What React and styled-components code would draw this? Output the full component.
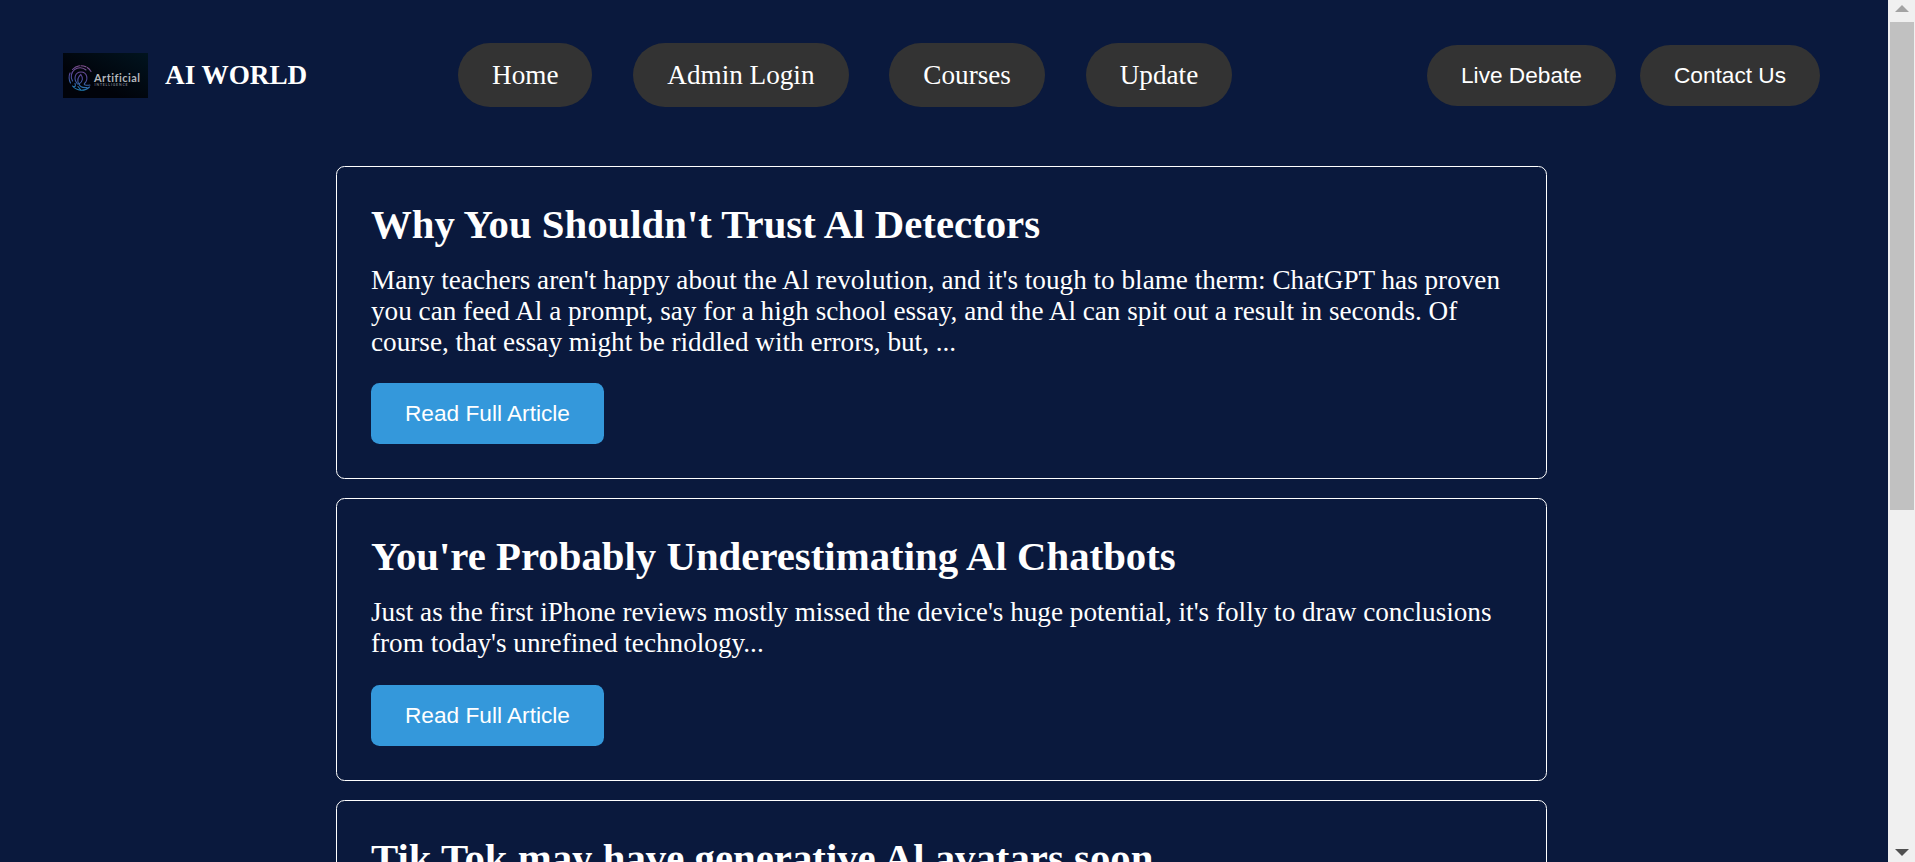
import React from "react";
import styled, { createGlobalStyle } from "styled-components";

const GlobalStyle = createGlobalStyle`
  html, body { margin: 0; height: 862px; overflow: hidden; background: #0a193d; }
  * { box-sizing: border-box; }
`;

const Screen = styled.div`
  display: flex;
  width: 1915px;
  height: 862px;
  overflow: hidden;
  background: #0a193d;
  color: #fff;
  font-family: "Liberation Serif", "Times New Roman", serif;
  font-size: 27.2px;
`;

const Page = styled.div`
  width: 1888px;
  height: 862px;
  overflow: hidden;
`;

const Header = styled.header`
  display: flex;
  align-items: center;
  height: 150px;
  padding: 0 68px 0 63px;
`;

const Brand = styled.div`
  display: flex;
  align-items: center;
  width: 395px;
  font-weight: 700;
  line-height: 31px;
`;

const Logo = styled.svg`
  display: block;
  flex: none;
  width: 85px;
  height: 45px;
  margin: 1px 17px 0 0;
  font-family: Lato, sans-serif;
  font-variant-ligatures: none;
`;

const Nav = styled.nav`
  display: flex;
  gap: 40.8px;
`;

const NavLink = styled.a`
  height: 64px;
  padding: 17px 34px 16px;
  border-radius: 34px;
  background: #333;
  line-height: 31px;
  white-space: nowrap;
`;

const Actions = styled.div`
  display: flex;
  gap: 24px;
  margin-left: auto;
`;

const Button = styled.button`
  height: 61px;
  padding: 0 34px 1px;
  border: 0;
  border-radius: ${(p) => (p.$pill ? "34px" : "8.5px")};
  background: ${(p) => (p.$pill ? "#333" : "#3498db")};
  color: #fff;
  font-family: "Liberation Sans", Arial, sans-serif;
  font-size: 22.67px;
  line-height: 26px;
  white-space: nowrap;
`;

const Feed = styled.main`
  display: flex;
  flex-direction: column;
  gap: 19px;
  width: 1211px;
  margin: 16px 0 0 336px;
`;

const Card = styled.article`
  flex: none;
  padding: 35px 34px 34px;
  border: 1px solid #fff;
  border-radius: 8.5px;
`;

const Title = styled.h2`
  margin: 0 0 17px;
  font-size: 40.8px;
  font-weight: 700;
  line-height: 46px;
`;

const Excerpt = styled.p`
  margin: 0 0 ${(p) => p.$space}px;
  line-height: 31px;
`;

const Scrollbar = styled.div`
  display: flex;
  flex-direction: column;
  align-items: center;
  width: 27px;
  height: 862px;
  padding: 5px 1px 6px 2px;
  background: #f0f0f0;
`;

const Arrow = styled.svg`
  display: block;
  width: 14px;
  height: 7px;
  fill: ${(p) => p.$color};
`;

const Thumb = styled.div`
  width: 24px;
  height: 488px;
  margin: 10px 0 auto;
  background: #c1c1c1;
`;

const articles = [
  {
    title: "Why You Shouldn't Trust Al Detectors",
    text: "Many teachers aren't happy about the Al revolution, and it's tough to blame therm: ChatGPT has proven you can feed Al a prompt, say for a high school essay, and the Al can spit out a result in seconds. Of course, that essay might be riddled with errors, but, ...",
    space: 25,
  },
  {
    title: "You're Probably Underestimating Al Chatbots",
    text: "Just as the first iPhone reviews mostly missed the device's huge potential, it's folly to draw conclusions from today's unrefined technology...",
    space: 26,
  },
  { title: "Tik Tok may have generative Al avatars soon", text: "", space: 25 },
];

function BrandLogo() {
  return (
    <Logo viewBox="0 0 85 45">
      <defs>
        <linearGradient id="plate" x1="0" y1="1" x2="1" y2="0">
          <stop offset="0.35" stopColor="#01030a" />
          <stop offset="1" stopColor="#01141f" />
        </linearGradient>
        <linearGradient id="print" gradientUnits="userSpaceOnUse" x1="20" y1="12" x2="15" y2="37">
          <stop offset="0" stopColor="#85508f" />
          <stop offset="0.5" stopColor="#51489a" />
          <stop offset="1" stopColor="#1f7fb4" />
        </linearGradient>
      </defs>
      <rect width="85" height="45" fill="url(#plate)" />
      <g fill="none" stroke="url(#print)" strokeWidth="1.1" strokeLinecap="round">
        <path d="M9.500 16.500A11.500 11.500 0 0 1 28 18.500" strokeDasharray="8 1.5 5 1.5" />
        <path d="M7 20A12 12 0 0 0 7.500 30M9.500 33A11.700 11.700 0 0 0 26.500 34" />
        <path d="M9.500 28A8.800 8.800 0 0 1 23 17" />
        <path d="M14.500 31C10 26 12 19 18 19C24.500 19 25.500 27 21.500 30.500C20.500 32 23 32.500 27 32" />
        <path d="M17.800 21.500C14 25 14 28 16 31C20.500 28 20 24.500 17.800 21.500Z" />
        <path d="M12 30.500C13 33 12 34 10.500 33.500M16 31C17 34 19.500 35 24 34.500M15 33.500L17.500 36.500" />
      </g>
      <text x="31" y="29" fill="#b4b8bc" fontSize="11" textLength="46">Artificial</text>
      <text x="31.500" y="32.700" fill="#747b84" fontSize="3.4" textLength="33">INTELLIGENCE</text>
    </Logo>
  );
}

export default function App() {
  return (
    <>
      <GlobalStyle />
      <Screen>
        <Page>
          <Header>
            <Brand>
              <BrandLogo />
              AI WORLD
            </Brand>
            <Nav>
              {["Home", "Admin Login", "Courses", "Update"].map((label) => (
                <NavLink key={label}>{label}</NavLink>
              ))}
            </Nav>
            <Actions>
              <Button $pill>Live Debate</Button>
              <Button $pill>Contact Us</Button>
            </Actions>
          </Header>
          <Feed>
            {articles.map((a) => (
              <Card key={a.title}>
                <Title>{a.title}</Title>
                <Excerpt $space={a.space}>{a.text}</Excerpt>
                <Button>Read Full Article</Button>
              </Card>
            ))}
          </Feed>
        </Page>
        <Scrollbar>
          <Arrow $color="#a3a3a3" viewBox="0 0 14 7"><path d="M7 0L14 7H0Z" /></Arrow>
          <Thumb />
          <Arrow $color="#505050" viewBox="0 0 14 7"><path d="M0 0H14L7 7Z" /></Arrow>
        </Scrollbar>
      </Screen>
    </>
  );
}
